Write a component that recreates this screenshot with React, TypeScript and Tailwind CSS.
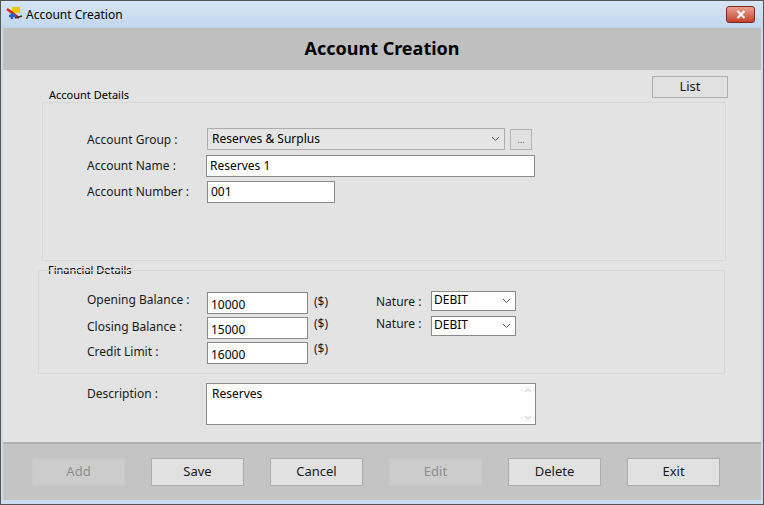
import React from 'react';

const lbl = "text-[12px] leading-[15px] text-[#1a1a1a] font-['DejaVu_Sans',sans-serif]";
const inp = "h-[22px] border border-[#8a8a8a] bg-white px-[3px] text-[12px] leading-[20px] text-black font-['DejaVu_Sans',sans-serif]";

const Chevron = () => (
  <svg width="9" height="6" viewBox="0 0 9 6" className="text-[#555]">
    <path d="M1 1l3.5 3.5L8 1" fill="none" stroke="currentColor" strokeWidth="1" />
  </svg>
);

const Btn = ({ label, disabled }: { label: string; disabled?: boolean }) => (
  <div
    className={`w-[93px] h-[28px] flex items-center justify-center text-[13px] font-['DejaVu_Sans',sans-serif] ${
      disabled ? 'bg-[#cccccc] text-[#8d8d8d] border border-[#c8c8c8]' : 'bg-[#e1e1e1] text-[#1a1a1a] border border-[#adadad]'
    }`}
  >
    {label}
  </div>
);

const NatureSelect = () => (
  <div className="w-[85px] h-[20px] border border-[#8a8a8a] bg-white flex items-center justify-between pl-[2px] pr-[4px]">
    <span className="text-[12px] font-['DejaVu_Sans',sans-serif] text-black leading-none -mt-[2px]">DEBIT</span>
    <Chevron />
  </div>
);

export default function App() {
  return (
    <div className="w-[764px] h-[505px] bg-[#c9dcf0] flex flex-col overflow-hidden border border-[#555]">
      {/* title bar */}
      <div className="h-[27px] flex items-center bg-gradient-to-b from-[#d6e5f5] to-[#c2d7ee] relative">
        <svg width="18" height="18" viewBox="0 0 18 18" className="ml-[5px]">
          <rect x="6" y="1" width="8" height="6" fill="#f5c400" />
          <path d="M1 3l12 9" stroke="#d22" strokeWidth="2.5" />
          <path d="M3 10h6M6 7v6" stroke="#1d5fd1" strokeWidth="2.5" />
          <path d="M9 12l7-2" stroke="#333" strokeWidth="1.5" />
        </svg>
        <span className="ml-[2px] text-[12px] text-black font-['Liberation_Sans',sans-serif]">Account Creation</span>
        <div className="absolute right-[8px] top-[5px] w-[29px] h-[17px] rounded-[3px] border border-[#7a2a1f] bg-gradient-to-b from-[#e8a090] to-[#c5402b] flex items-center justify-center">
          <svg width="10" height="9" viewBox="0 0 10 9">
            <path d="M1.5 1l7 7M8.5 1l-7 7" stroke="white" strokeWidth="2.2" />
          </svg>
        </div>
      </div>
      <div className="flex-1 mx-[2px] mb-[4px] flex flex-col bg-[#e3e3e3]">
        {/* header */}
        <div className="h-[42px] bg-[#bfbfbf] flex items-center justify-center">
          <span className="text-[18px] font-bold text-black font-['Liberation_Serif',serif] -mt-[2px]">Account Creation</span>
        </div>
        {/* body */}
        <div className="flex-1 relative flex flex-col">
          <div className="flex justify-end pr-[33px] pt-[6px]">
            <div className="w-[76px] h-[22px] border border-[#adadad] bg-[#e1e1e1] flex items-center justify-center text-[13px] font-['DejaVu_Sans',sans-serif] text-[#1a1a1a]">List</div>
          </div>
          {/* account details */}
          <div className="ml-[46px] -mt-[10px] text-[11px] leading-[13px] text-black font-['Liberation_Sans',sans-serif]">Account Details</div>
          <div className="ml-[39px] mr-[35px] mt-[1px] h-[159px] border border-[#d8d8d8] pt-[25px] pl-[44px]">
            <div className="flex items-center">
              <span className={`${lbl} w-[120px]`}>Account Group :</span>
              <div className="w-[298px] h-[22px] border border-[#adadad] bg-[#e5e5e5] flex items-center justify-between px-[4px]">
                <span className="text-[12px] text-black font-['Liberation_Sans',sans-serif]">Reserves &amp; Surplus</span>
                <Chevron />
              </div>
              <div className="ml-[5px] w-[22px] h-[21px] border border-[#b5b5b5] bg-[#e1e1e1] flex items-end justify-center text-[9px] pb-[2px] text-[#555]">...</div>
            </div>
            <div className="flex items-center mt-[5px]">
              <span className={`${lbl} w-[119px] -mt-[2px]`}>Account Name :</span>
              <div className={`${inp} w-[329px]`}>Reserves 1</div>
            </div>
            <div className="flex items-center mt-[4px]">
              <span className={`${lbl} w-[120px] -mt-[2px]`}>Account Number :</span>
              <div className={`${inp} w-[128px]`}>001</div>
            </div>
          </div>
          {/* financial details */}
          <div className="ml-[45px] mt-[2px] text-[11px] leading-[13px] text-black font-['Liberation_Sans',sans-serif]">Financial Details</div>
          <div className="ml-[35px] mr-[36px] -mt-[6px] h-[104px] border border-[#d8d8d8] pt-[20px] pl-[48px]">
            {[
              ['Opening Balance :', '10000', true],
              ['Closing Balance :', '15000', true],
              ['Credit Limit :', '16000', false],
            ].map(([l, v, n], i) => (
              <div key={i} className="flex items-start h-[25px]">
                <span className={`${lbl} w-[120px] ${i === 0 ? 'mt-[1px]' : 'mt-[3px]'}`}>{l as string}</span>
                <div className={`${inp} w-[101px] mt-[1px]`}>
                  <span className="relative top-[2px]">{v as string}</span>
                </div>
                <span className={`${lbl} ml-[6px] w-[62px] ${i === 0 ? 'mt-[3px]' : ''}`}>($)</span>
                {n && (
                  <>
                    <span className={`${lbl} w-[55px] ${i === 0 ? 'mt-[3px]' : ''}`}>Nature :</span>
                    <NatureSelect />
                  </>
                )}
              </div>
            ))}
          </div>
          {/* description */}
          <div className="flex items-start ml-[84px] mt-[9px]">
            <span className={`${lbl} w-[119px] mt-[3px]`}>Description :</span>
            <div className="w-[330px] h-[42px] border border-[#8a8a8a] bg-white flex justify-between">
              <span className="text-[12px] text-black font-['DejaVu_Sans',sans-serif] pl-[5px] pt-[1px]">Reserves</span>
              <div className="w-[14px] flex flex-col justify-between items-center py-[4px] text-[#bbb]">
                <svg width="8" height="5" viewBox="0 0 8 5"><path d="M1 4l3-3 3 3" fill="none" stroke="currentColor" /></svg>
                <svg width="8" height="5" viewBox="0 0 8 5"><path d="M1 1l3 3 3-3" fill="none" stroke="currentColor" /></svg>
              </div>
            </div>
          </div>
        </div>
        {/* footer buttons */}
        <div className="h-[58px] border-t-2 border-[#b0b0b0] bg-[#c4c4c4] flex items-center pl-[29px] gap-[26px]">
          <Btn label="Add" disabled />
          <Btn label="Save" />
          <Btn label="Cancel" />
          <Btn label="Edit" disabled />
          <Btn label="Delete" />
          <Btn label="Exit" />
        </div>
      </div>
    </div>
  );
}
